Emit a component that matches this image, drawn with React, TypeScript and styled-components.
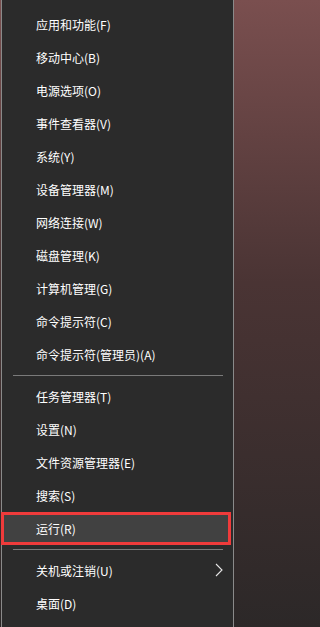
import styled, { createGlobalStyle } from "styled-components";

const GlobalStyle = createGlobalStyle`
  html, body {
    margin: 0;
    padding: 0;
    height: 100%;
  }
  body {
    background: linear-gradient(#7a4f4f 0%, #4a3434 45%, #2c2828 100%);
    font-family: "Noto Sans CJK SC", "Noto Sans", sans-serif;
    overflow: hidden;
  }
`;

type Entry = { label: string; active?: boolean; sub?: boolean } | "sep";

const entries: Entry[] = [
  { label: "应用和功能(F)" },
  { label: "移动中心(B)" },
  { label: "电源选项(O)" },
  { label: "事件查看器(V)" },
  { label: "系统(Y)" },
  { label: "设备管理器(M)" },
  { label: "网络连接(W)" },
  { label: "磁盘管理(K)" },
  { label: "计算机管理(G)" },
  { label: "命令提示符(C)" },
  { label: "命令提示符(管理员)(A)" },
  "sep",
  { label: "任务管理器(T)" },
  { label: "设置(N)" },
  { label: "文件资源管理器(E)" },
  { label: "搜索(S)" },
  { label: "运行(R)", active: true },
  "sep",
  { label: "关机或注销(U)", sub: true },
  { label: "桌面(D)" },
];

export default function App() {
  return (
    <>
      <GlobalStyle />
      <Menu>
        {entries.map((e, i) =>
          e === "sep" ? (
            <Separator key={i} />
          ) : (
            <Item key={i} $active={e.active}>
              <Label>{e.label}</Label>
              {e.sub && (
                <Chevron width="8" height="14" viewBox="0 0 8 14">
                  <path d="M1 1 L7 7 L1 13" fill="none" stroke="#e6e6e6" strokeWidth="1.1" />
                </Chevron>
              )}
            </Item>
          )
        )}
      </Menu>
    </>
  );
}

const Menu = styled.div`
  margin-left: 1px;
  width: 231px;
  height: 627px;
  box-sizing: content-box;
  background: #2b2b2b;
  border-left: 1px solid #8a8a8a;
  border-right: 1px solid #8a8a8a;
  padding-top: 8px;
  display: flex;
  flex-direction: column;
`;

const Item = styled.div<{ $active?: boolean }>`
  height: 33px;
  box-sizing: border-box;
  display: flex;
  align-items: center;
  justify-content: space-between;
  padding: 0 10px 0 34px;
  color: #ffffff;
  font-size: 12px;
  background: ${(p) => (p.$active ? "#414141" : "transparent")};
  ${(p) =>
    p.$active &&
    `
    margin: 0 2px 0 -1px;
    padding-left: 35px;
    border: 3px solid #ef3b3b;
    padding-left: 32px;
  `}
`;

const Label = styled.span`
  line-height: 1;
  white-space: nowrap;
`;

const Chevron = styled.svg`
  display: block;
  margin-top: -1px;
`;

const Separator = styled.div`
  height: 1px;
  margin: 4px 10px 4px 11px;
  background: #7a7a7a;
`;
